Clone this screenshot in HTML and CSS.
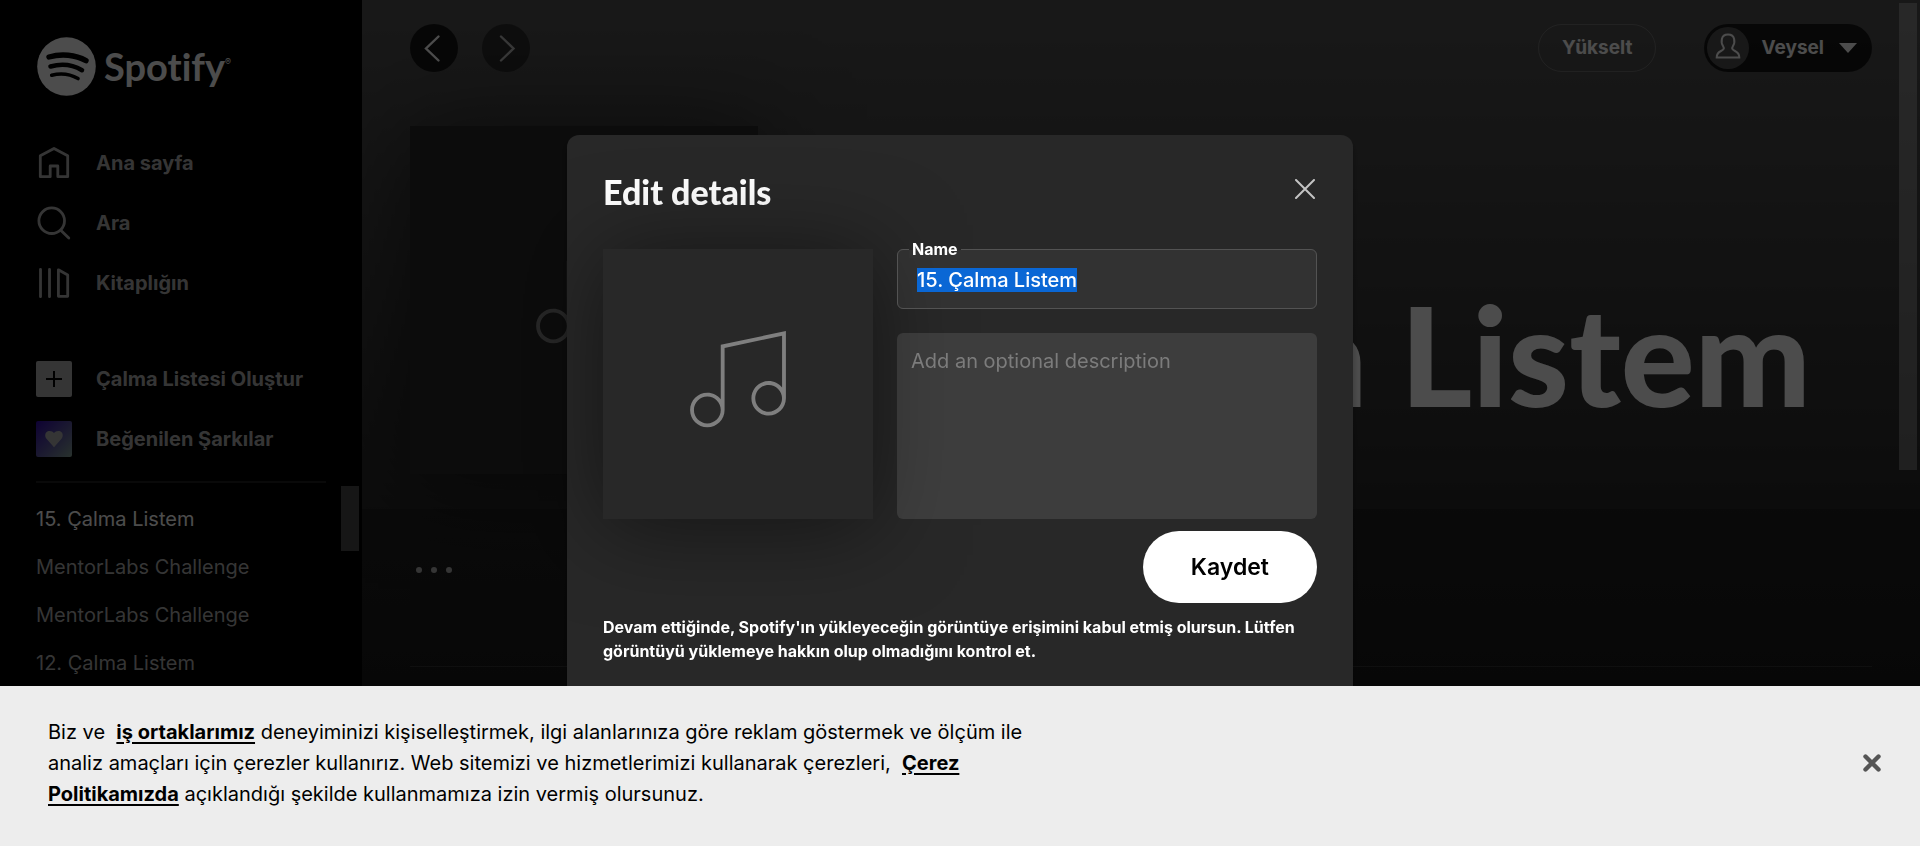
FILE: index.html
```html
<!DOCTYPE html>
<html lang="tr">
<head>
<meta charset="utf-8">
<title>Spotify – 15. Çalma Listem</title>
<link rel="stylesheet" href="styles.css">
</head>
<body>
<svg class="sprite" aria-hidden="true">
  <symbol id="note" viewBox="0 0 80 81">
    <path d="M25.6 11.565v45.38c-2.643-3.27-6.68-5.37-11.2-5.37-7.94 0-14.4 6.46-14.4 14.4s6.46 14.4 14.4 14.4 14.4-6.46 14.4-14.4v-51.81l48-10.205V47.2c-2.642-3.27-6.678-5.37-11.2-5.37-7.94 0-14.4 6.46-14.4 14.4s6.46 14.4 14.4 14.4S80 64.17 80 56.23V0L25.6 11.565zm-11.2 65.61c-6.176 0-11.2-5.025-11.2-11.2 0-6.177 5.024-11.2 11.2-11.2 6.176 0 11.2 5.023 11.2 11.2 0 6.174-5.026 11.2-11.2 11.2zm51.2-9.745c-6.176 0-11.2-5.024-11.2-11.2 0-6.174 5.024-11.2 11.2-11.2 6.176 0 11.2 5.026 11.2 11.2 0 6.178-5.026 11.2-11.2 11.2z"/>
  </symbol>
</svg>

<div class="app">
  <nav class="sidebar">
    <a class="logo" href="#">
      <svg class="logo-mark" viewBox="0 0 59 59" aria-hidden="true">
        <circle cx="29.500" cy="29.500" r="29.300" fill="currentColor"/>
        <g fill="none" stroke="#000" stroke-linecap="round">
          <path d="M12 20c12.500-3.600 26.500-2.200 37 3.600" stroke-width="5.400"/>
          <path d="M13.500 29.500c11-3 22.500-1.600 31.500 3.700" stroke-width="4.600"/>
          <path d="M14.700 38.200c9.500-2.400 18.500-1.200 26.300 3.300" stroke-width="3.600"/>
        </g>
      </svg>
      <span class="logo-word">Spotify</span><span class="logo-reg">®</span>
    </a>
    <ul class="nav">
      <li><a href="#">
        <svg class="icon" viewBox="0 0 36 36"><path d="M18 3.400 31.700 10.800V31.700H21.800V21H14.200V31.700H4.300V10.800z"/></svg>
        Ana sayfa</a></li>
      <li><a href="#">
        <svg class="icon" viewBox="0 0 36 36"><circle cx="15.700" cy="15.700" r="12.800"/><path d="M25 25.400 32.800 33"/></svg>
        Ara</a></li>
      <li><a href="#">
        <svg class="icon" viewBox="0 0 36 36"><path d="M4.500 4.300V31.700M13.500 4.300V31.700M22.400 4.800 31.700 10V31.300H22.400z"/></svg>
        Kitaplığın</a></li>
    </ul>
    <ul class="nav nav-actions">
      <li><button type="button">
        <span class="tile tile-add"><svg viewBox="0 0 36 36"><path d="M18 10v16M10 18h16" stroke="#000" stroke-width="2"/></svg></span>
        Çalma Listesi Oluştur</button></li>
      <li><a href="#">
        <span class="tile tile-liked"><svg viewBox="0 0 36 36"><path d="M18 26.200 10.500 17.800C8.300 15 9 10.800 12.600 10c2.100-.4 4.200.3 5.400 2.100 1.200-1.800 3.300-2.500 5.400-2.100 3.600.8 4.300 5 2.100 7.800z" fill="#b3b3b3"/></svg></span>
        Beğenilen Şarkılar</a></li>
    </ul>
    <hr class="rule">
    <div class="playlists">
      <ul>
        <li><a class="current" href="#">15. Çalma Listem</a></li>
        <li><a href="#">MentorLabs Challenge</a></li>
        <li><a href="#">MentorLabs Challenge</a></li>
        <li><a href="#">12. Çalma Listem</a></li>
      </ul>
      <span class="thumb"></span>
    </div>
  </nav>

  <main class="main">
    <section class="hero">
      <header class="topbar">
        <button class="round" type="button" aria-label="Geri"><svg viewBox="0 0 48 48"><path d="M28.500 12.500 16 24.500 28.500 36.500"/></svg></button>
        <button class="round round-off" type="button" aria-label="İleri"><svg viewBox="0 0 48 48"><path d="M19 12.500 31.500 24.500 19 36.500"/></svg></button>
        <button class="upgrade" type="button">Yükselt</button>
        <button class="user" type="button">
          <span class="avatar"><svg viewBox="0 0 42 42"><path d="M9.700 30.500c0-3.300 1.300-5 4.300-6.500 2.900-1.400 3.500-2.600 2-5-1.400-2-1.600-4.700-1.100-7C15.500 9 18 7.600 21 7.600S26.500 9 27.100 12c.5 2.300.3 5-1.100 7-1.500 2.400-.9 3.600 2 5 3 1.500 4.300 3.200 4.300 6.500z"/></svg></span>
          Veysel
          <svg class="caret" viewBox="0 0 18 10"><path d="M0 0h18L9 10z"/></svg>
        </button>
      </header>
      <div class="hero-body">
        <div class="cover"><svg class="cover-note"><use href="#note"/></svg></div>
        <h1 class="title">15. Çalma Listem</h1>
      </div>
    </section>
    <section class="tracks">
      <button class="more" type="button" aria-label="Daha fazla"><svg viewBox="0 0 36 8"><circle cx="3" cy="4" r="3"/><circle cx="18" cy="4" r="3"/><circle cx="33" cy="4" r="3"/></svg></button>
      <hr class="rule">
    </section>
    <span class="thumb"></span>
  </main>
</div>

<div class="overlay">
  <form class="modal" role="dialog" aria-labelledby="dialog-title">
    <div class="modal-head">
      <h2 id="dialog-title">Edit details</h2>
      <button class="modal-close" type="button" aria-label="Kapat"><svg viewBox="0 0 20 20"><path d="M1 1 19 19M19 1 1 19"/></svg></button>
    </div>
    <div class="modal-body">
      <div class="art"><svg class="cover-note"><use href="#note"/></svg></div>
      <div class="fields">
        <fieldset class="field">
          <legend><label for="name">Name</label></legend>
          <input id="name" type="text" value="15. Çalma Listem" autocomplete="off" spellcheck="false">
        </fieldset>
        <textarea class="description" aria-label="Description" placeholder="Add an optional description"></textarea>
      </div>
    </div>
    <button class="save" type="button">Kaydet</button>
    <p class="terms">Devam ettiğinde, Spotify'ın yükleyeceğin görüntüye erişimini kabul etmiş olursun. Lütfen görüntüyü yüklemeye hakkın olup olmadığını kontrol et.</p>
  </form>
</div>

<aside class="cookies">
  <p>Biz ve &nbsp;<a href="#">iş ortaklarımız</a> deneyiminizi kişiselleştirmek, ilgi alanlarınıza göre reklam göstermek ve ölçüm ile analiz amaçları için çerezler kullanırız. Web sitemizi ve hizmetlerimizi kullanarak çerezleri, &nbsp;<a href="#">Çerez Politikamızda</a> açıklandığı şekilde kullanmamıza izin vermiş olursunuz.</p>
  <button type="button" aria-label="Kapat"><svg viewBox="0 0 18 18"><path d="M2.500 2.500l13 13M15.500 2.500l-13 13"/></svg></button>
</aside>
<script src="script.js"></script>
</body>
</html>
```
FILE: script.js
```js
const nameInput = document.getElementById("name");
nameInput.focus();
nameInput.select();
```
FILE: styles.css
```css
*,
*::before,
*::after {
  box-sizing: border-box;
}

body {
  margin: 0;
  background: #000;
  color: #fff;
  font-family: Inter, "Liberation Sans", sans-serif;
  font-size: 20px;
  line-height: 24px;
  font-variant-ligatures: none;
}

a {
  color: inherit;
  text-decoration: none;
}

button,
input,
textarea {
  font: inherit;
  color: inherit;
  border: 0;
  padding: 0;
  margin: 0;
  background: none;
}

ul {
  list-style: none;
  margin: 0;
  padding: 0;
}

svg {
  display: block;
}

.sprite {
  display: none;
}

.app {
  display: flex;
  height: 100vh;
  overflow: hidden;
}

/* Sidebar */
.sidebar {
  flex: 0 0 362px;
  display: flex;
  flex-direction: column;
  padding-top: 36px;
  color: #b3b3b3;
  background: #000;
}

.logo {
  display: flex;
  align-items: center;
  height: 60px;
  margin-bottom: 37px;
  padding-left: 37px;
  color: #fff;
}

.logo-mark {
  width: 59px;
  height: 59px;
  margin-right: 8px;
}

.logo-word {
  font-family: Lato, "Liberation Sans", sans-serif;
  font-size: 38px;
  font-weight: 700;
  line-height: 48px;
}

.logo-reg {
  align-self: flex-start;
  padding-top: 14px;
  font-size: 9px;
}

.nav a,
.nav button {
  display: flex;
  align-items: center;
  gap: 24px;
  width: 100%;
  height: 60px;
  padding-left: 36px;
  font-weight: 700;
  text-align: left;
}

.nav-actions {
  margin-top: 36px;
}

.icon {
  width: 36px;
  height: 36px;
  fill: none;
  stroke: currentColor;
  stroke-width: 2.8;
  stroke-linecap: round;
  stroke-linejoin: round;
}

.tile {
  width: 36px;
  height: 36px;
  border-radius: 2px;
}

.tile-add {
  background: #b3b3b3;
}

.tile-liked {
  background: linear-gradient(135deg, #3007ab, #6363a0 60%, #89a798);
}

.rule {
  height: 2px;
  border: 0;
  margin: 12px 36px 0;
  background: rgba(255, 255, 255, 0.12);
}

.playlists {
  display: flex;
  justify-content: space-between;
  align-items: flex-start;
  padding: 3px 3px 0 36px;
}

.playlists ul {
  padding-top: 9px;
}

.playlists a {
  display: block;
  line-height: 48px;
}

.playlists .current {
  color: #fff;
}

.thumb {
  width: 18px;
  height: 65px;
  background: rgba(255, 255, 255, 0.3);
}

/* Main view */
.main {
  position: relative;
  flex: 1;
  min-width: 0;
  background: #121212;
}

.main > .thumb {
  position: absolute;
  top: 3px;
  right: 3px;
  height: 467px;
}

.hero {
  padding: 24px 48px 35px;
  background: linear-gradient(transparent, rgba(0, 0, 0, 0.5)) #535353;
}

.topbar {
  display: flex;
  align-items: center;
  margin-bottom: 54px;
  font-size: 19px;
  font-weight: 700;
}

.round {
  width: 48px;
  height: 48px;
  margin-right: 24px;
  border-radius: 50%;
  background: rgba(0, 0, 0, 0.7);
}

.round svg {
  fill: none;
  stroke: #fff;
  stroke-width: 2.4;
  stroke-linecap: round;
}

.round-off {
  opacity: 0.6;
}

.upgrade {
  height: 48px;
  margin-left: auto;
  margin-right: 48px;
  padding: 0 23px;
  border: 1px solid rgba(255, 255, 255, 0.2);
  border-radius: 24px;
}

.user {
  display: flex;
  align-items: center;
  height: 48px;
  padding: 0 15px 0 3px;
  border-radius: 24px;
  background: rgba(0, 0, 0, 0.7);
}

.avatar {
  width: 42px;
  height: 42px;
  margin-right: 12px;
  border-radius: 50%;
  background: #535353;
}

.avatar svg {
  fill: none;
  stroke: #fff;
  stroke-width: 2;
}

.caret {
  width: 18px;
  height: 10px;
  margin-left: 15px;
  fill: currentColor;
}

.hero-body {
  display: flex;
  align-items: flex-end;
}

.cover {
  display: grid;
  flex: 0 0 348px;
  height: 348px;
  place-items: center;
  padding-bottom: 10px;
  background: #282828;
  color: #7f7f7f;
  box-shadow: 0 6px 90px rgba(0, 0, 0, 0.5);
}

.cover-note {
  width: 96px;
  height: 97px;
  fill: currentColor;
}

.title {
  margin: 0 0 48px;
  font-family: Lato, "Liberation Sans", sans-serif;
  font-size: 138px;
  font-weight: 900;
  line-height: 144px;
  white-space: nowrap;
}

.tracks {
  height: 348px;
  padding-top: 57px;
  background: linear-gradient(rgba(0, 0, 0, 0.6), #121212) #535353;
}

.more {
  display: block;
  margin-left: 54px;
}

.more svg {
  width: 36px;
  height: 8px;
  fill: #b3b3b3;
}

.tracks .rule {
  height: 1px;
  margin: 92px 48px 0;
}

/* Dialog */
.overlay {
  position: fixed;
  inset: 0;
  display: flex;
  align-items: center;
  justify-content: center;
  background: rgba(0, 0, 0, 0.7);
}

.modal {
  width: 786px;
  padding: 36px 36px 48px;
  border-radius: 12px;
  background: #282828;
  box-shadow: 0 6px 6px rgba(0, 0, 0, 0.3);
}

.modal-head {
  display: flex;
  align-items: center;
  justify-content: space-between;
  height: 42px;
  margin-bottom: 36px;
}

.modal-head h2 {
  margin: 0;
  font-family: Lato, "Liberation Sans", sans-serif;
  font-size: 34px;
  font-weight: 900;
  line-height: 42px;
}

.modal-close {
  padding: 2px;
  margin-bottom: 6px;
}

.modal-close svg {
  width: 20px;
  height: 20px;
  stroke: #c4c4c4;
  stroke-width: 2;
  stroke-linecap: round;
}

.modal-body {
  display: grid;
  grid-template-columns: 270px 1fr;
  gap: 24px;
}

.art {
  display: grid;
  height: 270px;
  place-items: center;
  padding-bottom: 10px;
  background: #282828;
  color: #7f7f7f;
  box-shadow: 0 6px 90px rgba(0, 0, 0, 0.5);
}

.fields {
  display: flex;
  flex-direction: column;
  gap: 24px;
  z-index: 1;
}

.field {
  position: relative;
  height: 60px;
  margin: 0;
  padding: 0;
  border: 1px solid #535353;
  border-radius: 6px;
  background: rgba(255, 255, 255, 0.05);
}

.field legend {
  position: absolute;
  top: -10px;
  left: 11px;
  padding: 0 3px;
  font-size: 16px;
  font-weight: 700;
  line-height: 18px;
  background: linear-gradient(#272727 10px, #323232 10px);
}

.field input {
  width: 100%;
  height: 58px;
  padding: 2px 19px 0;
  font-weight: 500;
  outline: 0;
}

.field input::selection {
  color: #fff;
  background: rgba(10, 104, 216, 0.99);
}

.description {
  flex: 1;
  padding: 16px 14px;
  border-radius: 6px;
  background: rgba(255, 255, 255, 0.1);
  resize: none;
}

.description::placeholder {
  color: #7c7c7c;
}

.save {
  display: block;
  height: 72px;
  margin: 12px 0 12px auto;
  padding: 0 48px;
  border-radius: 36px;
  background: #fff;
  color: #000;
  font-size: 23px;
  font-weight: 600;
}

.terms {
  margin: 0;
  font-size: 16px;
  font-weight: 700;
}

/* Cookie notice */
.cookies {
  position: fixed;
  inset: auto 0 0;
  display: flex;
  align-items: center;
  justify-content: space-between;
  height: 160px;
  padding: 0 39px 6px 48px;
  background: #ededed;
  color: #000;
}

.cookies p {
  max-width: 990px;
  margin: 0;
  line-height: 31px;
}

.cookies a {
  font-weight: 700;
  text-decoration: underline;
  text-decoration-thickness: 2px;
  text-underline-offset: 3px;
}

.cookies svg {
  width: 18px;
  height: 18px;
  stroke: #555;
  stroke-width: 4.4;
  stroke-linecap: round;
}
```
